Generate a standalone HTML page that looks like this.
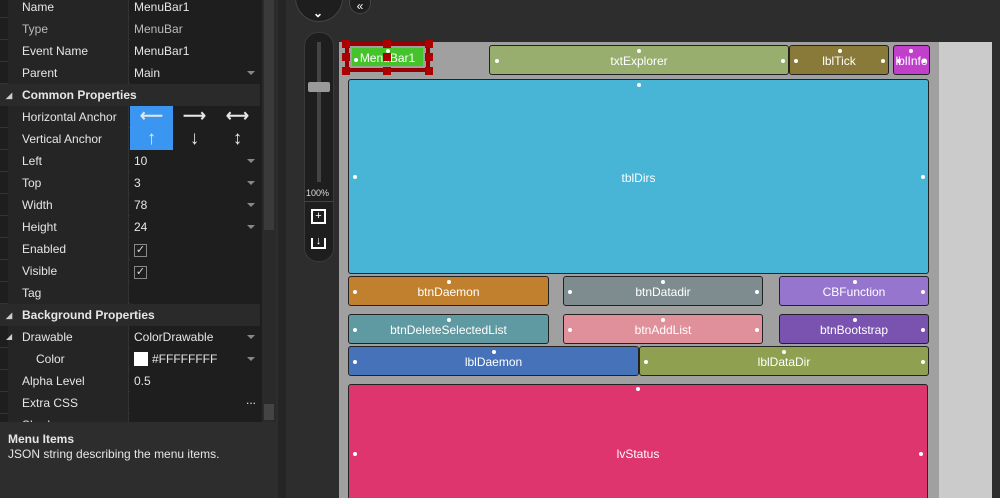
<!DOCTYPE html>
<html style="overflow:hidden;width:1000px;height:498px"><head><meta charset="utf-8"><style>
*{margin:0;padding:0;box-sizing:border-box}
body{width:1000px;height:498px;overflow:hidden;background:#2d2d2d;font-family:"Liberation Sans",sans-serif;font-size:12px;color:#e6e6e6;position:relative}
.a{position:absolute}
.row{position:absolute;left:0;width:260px;height:22px;border-bottom:1px solid #333}
.row .l{position:absolute;left:8px;top:0;width:121px;height:22px;background:#252526;padding-left:14px;line-height:23px;border-right:1px solid #333}
.row .v{position:absolute;left:130px;top:0;width:130px;height:22px;background:#1e1e1e;padding-left:4px;line-height:23px}
.dd::after{content:"";position:absolute;right:5px;top:9px;border:4px solid transparent;border-top:4px solid #888}
.hdr{position:absolute;left:0;width:260px;height:22px;background:#2a2a2b;font-weight:bold;line-height:23px;padding-left:22px}
.hdr::before{content:"◢";position:absolute;left:6px;font-size:8px;color:#ccc}
.c{position:absolute;border:1px solid #222;border-radius:3px;color:#fff;font-size:12px;display:flex;align-items:center;justify-content:center;padding-top:2px}
.d{position:absolute;width:4px;height:4px;border-radius:2px;background:#fff}
.chk{display:inline-block;width:13px;height:13px;border:1px solid #888;margin-top:4px;font-size:11px;line-height:11px;text-align:center;color:#ddd}
</style></head><body>
<div class="a" style="left:0;top:0;width:262px;height:422px;background:#1e1e1e"></div>
<div class="row" style="top:-4px"><div class="l">Name</div><div class="v">MenuBar1</div></div>
<div class="row" style="top:18px"><div class="l" style="color:#bbb">Type</div><div class="v" style="color:#bbb">MenuBar</div></div>
<div class="row" style="top:40px"><div class="l">Event Name</div><div class="v">MenuBar1</div></div>
<div class="row" style="top:62px"><div class="l">Parent</div><div class="v dd">Main</div></div>
<div class="hdr" style="top:84px">Common Properties</div>
<div class="row" style="top:106px"><div class="l">Horizontal Anchor</div><div class="v" style="padding:0"><div class="a" style="left:0;width:43px;height:22px;background:#3a96f0;text-align:center;line-height:21px;font-size:16px;font-weight:bold">⟵</div><div class="a" style="left:43px;width:43px;text-align:center;line-height:21px;font-size:16px;font-weight:bold">⟶</div><div class="a" style="left:86px;width:43px;text-align:center;line-height:21px;font-size:16px;font-weight:bold">⟷</div></div></div>
<div class="row" style="top:128px"><div class="l">Vertical Anchor</div><div class="v" style="padding:0"><div class="a" style="left:0;width:43px;height:22px;background:#3a96f0;text-align:center;line-height:22px;font-size:19px;font-weight:bold">↑</div><div class="a" style="left:43px;width:43px;text-align:center;line-height:22px;font-size:19px;font-weight:bold">↓</div><div class="a" style="left:86px;width:43px;text-align:center;line-height:22px;font-size:19px;font-weight:bold">↕</div></div></div>
<div class="row" style="top:150px"><div class="l">Left</div><div class="v dd">10</div></div>
<div class="row" style="top:172px"><div class="l">Top</div><div class="v dd">3</div></div>
<div class="row" style="top:194px"><div class="l">Width</div><div class="v dd">78</div></div>
<div class="row" style="top:216px"><div class="l">Height</div><div class="v dd">24</div></div>
<div class="row" style="top:238px"><div class="l">Enabled</div><div class="v"><span class="chk">✓</span></div></div>
<div class="row" style="top:260px"><div class="l">Visible</div><div class="v"><span class="chk">✓</span></div></div>
<div class="row" style="top:282px"><div class="l">Tag</div><div class="v"></div></div>
<div class="hdr" style="top:304px">Background Properties</div>
<div class="row" style="top:326px"><div class="l">Drawable</div><div class="v dd">ColorDrawable</div></div>
<div class="a" style="left:6px;top:332px;font-size:8px;color:#ccc">◢</div>
<div class="row" style="top:348px"><div class="l" style="padding-left:28px">Color</div><div class="v dd"><span style="display:inline-block;width:14px;height:14px;background:#fff;vertical-align:-3px;margin-right:4px"></span>#FFFFFFFF</div></div>
<div class="row" style="top:370px"><div class="l">Alpha Level</div><div class="v">0.5</div></div>
<div class="row" style="top:392px"><div class="l">Extra CSS</div><div class="v"><span style="position:absolute;right:4px;top:-3px">...</span></div></div>
<div class="row" style="top:414px"><div class="l">Shadow</div><div class="v"></div></div>
<div class="a" style="left:262px;top:0;width:14px;height:422px;background:#2a2a2a"></div>
<div class="a" style="left:264px;top:0;width:10px;height:230px;background:#3a3a3a"></div>
<div class="a" style="left:264px;top:404px;width:10px;height:16px;background:#444"></div>
<div class="a" style="left:0;top:422px;width:278px;height:76px;background:#2d2d2d;padding:10px 8px;line-height:15px"><b>Menu Items</b><br>JSON string describing the menu items.</div>
<div class="a" style="left:278px;top:0;width:8px;height:498px;background:#252525"></div>
<div class="a" style="left:295px;top:-26px;width:48px;height:48px;border-radius:24px;background:#1e1e1e;border:1px solid #444"></div>
<div class="a" style="left:313px;top:6px;font-size:12px;color:#fff;font-weight:bold">⌄</div>
<div class="a" style="left:349px;top:-8px;width:22px;height:22px;border-radius:11px;background:#1e1e1e;border:1px solid #444;color:#fff;font-size:12px;text-align:center;line-height:26px">«</div>
<div class="a" style="left:304px;top:32px;width:30px;height:230px;border-radius:14px;background:#1e1e1e;border:1px solid #3a3a3a"></div>
<div class="a" style="left:317px;top:42px;width:4px;height:140px;background:#444"></div>
<div class="a" style="left:308px;top:82px;width:22px;height:10px;background:#9a9a9a;border-radius:2px"></div>
<div class="a" style="left:306px;top:188px;font-size:9px;color:#ddd">100%</div>
<div class="a" style="left:304px;top:201px;width:30px;height:1px;background:#444"></div>
<div class="a" style="left:311px;top:209px;width:15px;height:15px;border:2px solid #fff;color:#fff;font-size:11px;text-align:center;line-height:11px">+</div>
<div class="a" style="left:311px;top:238px;width:15px;height:11px;border:2px solid #fff;border-top:none;color:#fff;font-size:11px;text-align:center;line-height:6px">↓</div>
<div class="a" style="left:339px;top:42px;width:600px;height:456px;background:#a0a0a0"></div>
<div class="a" style="left:939px;top:42px;width:53px;height:456px;background:#cbcbcb"></div>
<div class="a" style="left:992px;top:0;width:8px;height:498px;background:#2d2d2d"></div>

<div class="a" style="left:345px;top:42px;width:85px;height:30px;border:4px solid #960000"></div>
<div class="c" style="left:352px;top:48px;width:71px;height:18px;background:#44c42a;border:none;border-radius:0">MenuBar1</div>
<div class="a" style="left:342px;top:40px;width:8px;height:8px;background:#a00"></div><div class="a" style="left:383px;top:40px;width:8px;height:8px;background:#a00"></div><div class="a" style="left:425px;top:40px;width:8px;height:8px;background:#a00"></div>
<div class="a" style="left:342px;top:53px;width:8px;height:8px;background:#a00"></div><div class="a" style="left:383px;top:53px;width:8px;height:8px;background:#a00"></div><div class="a" style="left:425px;top:53px;width:8px;height:8px;background:#a00"></div>
<div class="a" style="left:342px;top:67px;width:8px;height:8px;background:#a00"></div><div class="a" style="left:383px;top:67px;width:8px;height:8px;background:#a00"></div><div class="a" style="left:425px;top:67px;width:8px;height:8px;background:#a00"></div>

<div class="c" style="left:489px;top:45px;width:300px;height:30px;background:#97ae6e">txtExplorer</div>
<div class="c" style="left:789px;top:45px;width:100px;height:30px;background:#8a7a3a">lblTick</div>
<div class="c" style="left:893px;top:45px;width:37px;height:30px;background:#c040cc;overflow:hidden">lblInfo</div>
<div class="c" style="left:348px;top:79px;width:581px;height:195px;background:#48b4d6">tblDirs</div>
<div class="c" style="left:348px;top:276px;width:201px;height:30px;background:#c0802e">btnDaemon</div>
<div class="c" style="left:563px;top:276px;width:200px;height:30px;background:#7f8c8f">btnDatadir</div>
<div class="c" style="left:779px;top:276px;width:150px;height:30px;background:#9575cd">CBFunction</div>
<div class="c" style="left:348px;top:314px;width:201px;height:30px;background:#5f9aa2">btnDeleteSelectedList</div>
<div class="c" style="left:563px;top:314px;width:200px;height:30px;background:#e0909a">btnAddList</div>
<div class="c" style="left:779px;top:314px;width:150px;height:30px;background:#7a52b0">btnBootstrap</div>
<div class="c" style="left:348px;top:346px;width:291px;height:30px;background:#4572b8">lblDaemon</div>
<div class="c" style="left:639px;top:346px;width:290px;height:30px;background:#8fa050">lblDataDir</div>
<div class="c" style="left:348px;top:384px;width:580px;height:114px;background:#de356f;align-items:flex-start;padding-top:62px;border-bottom:none;border-radius:3px 3px 0 0">lvStatus</div>
<div class="d" style="left:354px;top:58px"></div><div class="d" style="left:386px;top:49px"></div>
<div class="d" style="left:495px;top:59px"></div><div class="d" style="left:637px;top:49px"></div><div class="d" style="left:781px;top:59px"></div>
<div class="d" style="left:794px;top:59px"></div><div class="d" style="left:838px;top:49px"></div><div class="d" style="left:881px;top:59px"></div>
<div class="d" style="left:909px;top:49px"></div><div class="d" style="left:922px;top:59px"></div><div class="d" style="left:897px;top:59px"></div>
<div class="d" style="left:637px;top:83px"></div><div class="d" style="left:353px;top:175px"></div><div class="d" style="left:921px;top:175px"></div>
<div class="d" style="left:447px;top:280px"></div><div class="d" style="left:353px;top:290px"></div>
<div class="d" style="left:661px;top:280px"></div><div class="d" style="left:568px;top:290px"></div><div class="d" style="left:755px;top:290px"></div>
<div class="d" style="left:853px;top:280px"></div><div class="d" style="left:921px;top:290px"></div>
<div class="d" style="left:447px;top:318px"></div><div class="d" style="left:353px;top:328px"></div>
<div class="d" style="left:661px;top:318px"></div><div class="d" style="left:568px;top:328px"></div><div class="d" style="left:755px;top:328px"></div>
<div class="d" style="left:853px;top:318px"></div><div class="d" style="left:921px;top:328px"></div>
<div class="d" style="left:492px;top:350px"></div><div class="d" style="left:353px;top:360px"></div>
<div class="d" style="left:782px;top:350px"></div><div class="d" style="left:644px;top:360px"></div><div class="d" style="left:921px;top:360px"></div>
<div class="d" style="left:636px;top:387px"></div><div class="d" style="left:353px;top:452px"></div><div class="d" style="left:919px;top:452px"></div>
</body></html>
